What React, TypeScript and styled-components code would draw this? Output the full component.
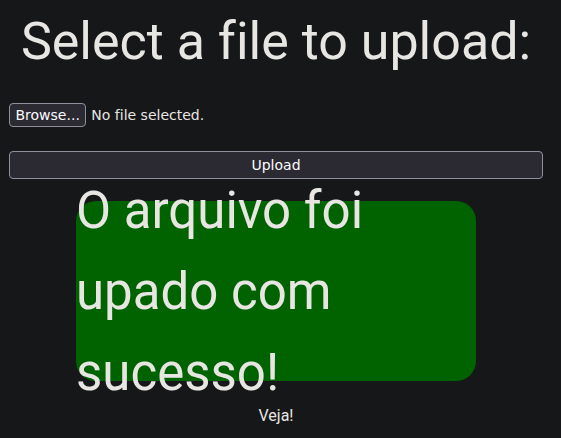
import React from "react";
import styled, { createGlobalStyle } from "styled-components";

const GlobalStyle = createGlobalStyle`
  html, body {
    background: #161719;
  }
  body {
    margin: 8px;
    color: #e8e6e3;
    font-family: Roboto, "Liberation Sans", sans-serif;
    font-variant-ligatures: none;
  }
`;

const Page = styled.main`
  width: 536px;
  display: flex;
  flex-direction: column;
  align-items: center;
`;

const Title = styled.h1`
  margin: 2px 0 0;
  font-family: Roboto, "Liberation Sans", sans-serif;
  font-weight: 400;
  font-size: 52px;
  line-height: 64px;
  color: #e8e6e3;
  text-align: center;
  font-variant-ligatures: none;
`;

const UploadForm = styled.form`
  align-self: stretch;
  display: flex;
  flex-direction: column;
  margin-top: 29px;
  padding-left: 1px;
`;

const FileRow = styled.div`
  display: flex;
  align-items: center;
  gap: 5px;
  font-family: "DejaVu Sans", sans-serif;
  font-size: 14px;
  color: #e8e6e3;
`;

const ControlButton = styled.button<{ $wide?: boolean }>`
  box-sizing: border-box;
  font-family: "DejaVu Sans", sans-serif;
  font-size: 14px;
  color: #fbfbfe;
  background: #2b2a33;
  border: 1px solid #8f8f9d;
  border-radius: 4px;
  margin: 0;
  padding: ${(p) => (p.$wide ? "5px 6px 4px" : "3px 5.5px")};
  line-height: ${(p) => (p.$wide ? "17px" : "16px")};
  text-align: center;
  cursor: pointer;
`;

const FileName = styled.span`
  white-space: nowrap;
`;

const UploadButton = styled(ControlButton)`
  margin-top: 24px;
  width: 534px;
`;

const SuccessBox = styled.section`
  box-sizing: border-box;
  width: 400px;
  height: 180px;
  margin-top: 22px;
  border-radius: 20px;
  background: #006300;
  display: flex;
  align-items: center;
`;

const SuccessText = styled.p`
  margin: 0;
  font-family: Roboto, "Liberation Sans", sans-serif;
  font-size: 51px;
  line-height: 81px;
  color: #e8e6e3;
  font-variant-ligatures: none;
`;

const Footer = styled.p`
  margin: 25px 0 0;
  font-family: Roboto, "Liberation Sans", sans-serif;
  font-size: 16px;
  line-height: 20px;
  color: #e8e6e3;
`;

export default function App() {
  return (
    <>
      <GlobalStyle />
      <Page>
        <Title>Select a file to upload:</Title>
        <UploadForm onSubmit={(e) => e.preventDefault()}>
          <FileRow>
            <ControlButton type="button">Browse...</ControlButton>
            <FileName>No file selected.</FileName>
          </FileRow>
          <UploadButton type="submit" $wide>
            Upload
          </UploadButton>
        </UploadForm>
        <SuccessBox>
          <SuccessText>O arquivo foi upado com sucesso!</SuccessText>
        </SuccessBox>
        <Footer>Veja!</Footer>
      </Page>
    </>
  );
}
